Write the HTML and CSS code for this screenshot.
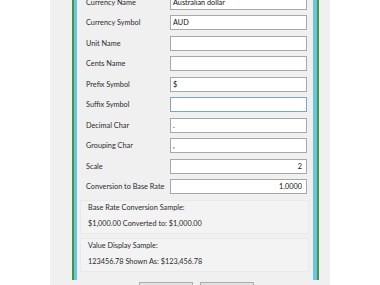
FILE: index.html
```html
<!DOCTYPE html>
<html lang="en">
<head>
    <meta charset="UTF-8">
    <title>Currency Settings</title>
    <link rel="stylesheet" href="styles.css">
</head>
<body>
    <div class="backdrop">
        <div class="frame">
            <div class="dialog">
                <div class="fields">
                    <label>Currency Name</label>
                    <input type="text" value="Australian dollar">

                    <label>Currency Symbol</label>
                    <input type="text" value="AUD">

                    <label>Unit Name</label>
                    <input type="text" value="">

                    <label>Cents Name</label>
                    <input type="text" value="">

                    <label>Prefix Symbol</label>
                    <input type="text" value="$">

                    <label>Suffix Symbol</label>
                    <input type="text" class="focused" value="">

                    <label>Decimal Char</label>
                    <input type="text" value=".">

                    <label>Grouping Char</label>
                    <input type="text" value=",">

                    <label>Scale</label>
                    <input type="text" class="num" value="2">

                    <label>Conversion to Base Rate</label>
                    <input type="text" class="num" value="1.0000">
                </div>

                <div class="sample">
                    <div>Base Rate Conversion Sample:</div>
                    <div>$1,000.00 Converted to: $1,000.00</div>
                </div>

                <div class="sample">
                    <div>Value Display Sample:</div>
                    <div>123456.78 Shown As: $123,456.78</div>
                </div>

                <div class="buttons">
                    <button aria-label="OK"></button>
                    <button aria-label="Cancel"></button>
                </div>
            </div>
        </div>
    </div>
</body>
</html>
```

FILE: styles.css
```css
body, html {
    margin: 0;
    height: 285px;
    overflow: hidden;
    background: #ffffff;
    font-family: Lato, "Liberation Sans", sans-serif;
    font-size: 7.3px;
    color: #2b2b2b;
}

.backdrop {
    margin-left: 50px;
    width: 280px;
    height: 285px;
    padding-left: 22px;
    box-sizing: border-box;
    background: #f0f0f0;
    overflow: hidden;
}

.frame {
    width: 247px;
    height: 100%;
    border-left: 2px solid #3f9a3f;
    border-right: 2px solid #3f9a3f;
    box-sizing: border-box;
}

.dialog {
    height: 100%;
    padding: 0 6px 0 9px;
    border-left: 3px solid #6cc3e3;
    border-right: 4px solid #6cc3e3;
    box-sizing: border-box;
    background: #f0f0f0;
}

.fields {
    display: grid;
    grid-template-columns: 84px 137px;
    row-gap: 5.5px;
    align-items: center;
    margin-top: -5.5px;
    white-space: nowrap;
}

.fields input {
    height: 15px;
    margin: 0;
    padding: 0 2px;
    border: 1px solid #a8a8a8;
    box-sizing: border-box;
    background: #ffffff;
    font: inherit;
    color: #111;
    outline: none;
}

.fields input.focused {
    border-color: #7fa3d0;
}

.fields input.num {
    text-align: right;
    padding-right: 4px;
}

.sample {
    margin: 6px -2px 0 -6px;
    padding: 2px 7px 4px;
    border: 1px solid #e9e9e9;
    background: #f3f3f3;
    display: flex;
    flex-direction: column;
    gap: 6px;
    line-height: 10px;
    white-space: nowrap;
}

.sample + .sample {
    margin-top: 4px;
}

.buttons {
    display: flex;
    justify-content: center;
    gap: 7px;
    margin-top: 10px;
}

.buttons button {
    width: 54px;
    height: 18px;
    padding: 0;
    border: 1px solid #adadad;
    background: #e1e1e1;
}
```
